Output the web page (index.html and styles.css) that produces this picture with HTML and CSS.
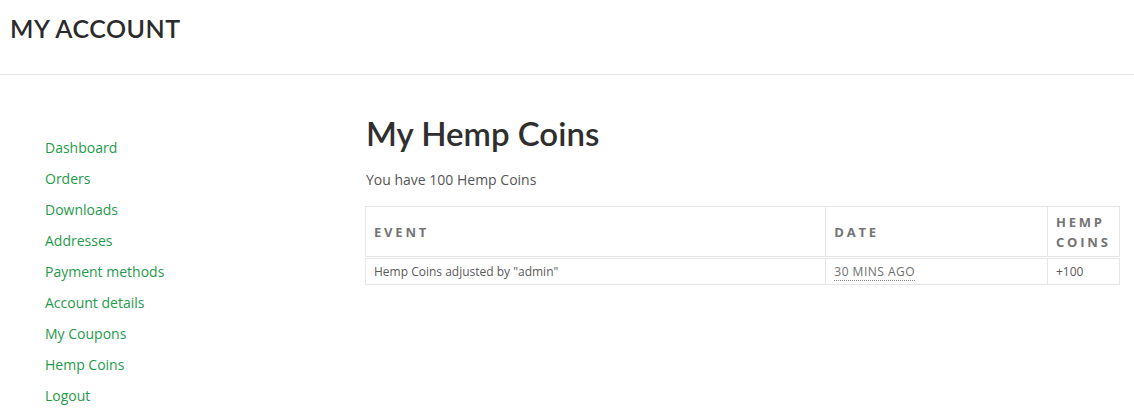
FILE: index.html
```
<!DOCTYPE html>
<html>
<head>
<meta charset="utf-8">
<link rel="stylesheet" href="styles.css">
</head>
<body>
<header class="page-header">
  <h1 class="page-title">MY ACCOUNT</h1>
</header>
<div class="account">
  <nav class="account-nav">
    <ul>
      <li><a href="#">Dashboard</a></li>
      <li><a href="#">Orders</a></li>
      <li><a href="#">Downloads</a></li>
      <li><a href="#">Addresses</a></li>
      <li><a href="#">Payment methods</a></li>
      <li><a href="#">Account details</a></li>
      <li><a href="#">My Coupons</a></li>
      <li><a href="#">Hemp Coins</a></li>
      <li><a href="#">Logout</a></li>
    </ul>
  </nav>
  <main class="account-content">
    <h2 class="content-title">My Hemp Coins</h2>
    <p class="balance">You have 100 Hemp Coins</p>
    <table class="points">
      <thead>
        <tr>
          <th class="col-event">Event</th>
          <th class="col-date">Date</th>
          <th class="col-coins">Hemp Coins</th>
        </tr>
      </thead>
      <tbody>
        <tr>
          <td>Hemp Coins adjusted by "admin"</td>
          <td><abbr class="ago" title="30 mins ago">30 mins ago</abbr></td>
          <td>+100</td>
        </tr>
      </tbody>
    </table>
  </main>
</div>
</body>
</html>
```
FILE: styles.css
```
html, body {
  margin: 0;
  padding: 0;
  background: #fff;
}
body {
  font-family: "Open Sans", "Liberation Sans", sans-serif;
  color: #555;
}
.page-header {
  border-bottom: 1px solid #e6e6e6;
  height: 75px;
  box-sizing: border-box;
  padding: 14px 10px 0;
}
.page-title {
  margin: 0;
  font-family: "Lato", "Liberation Sans", sans-serif;
  font-weight: 600;
  font-size: 25px;
  line-height: 28px;
  letter-spacing: 0.5px;
  color: #2b2b2b;
}
.account {
  display: flex;
  padding-top: 43px;
}
.account-nav {
  width: 365px;
  padding-left: 45px;
  box-sizing: border-box;
  flex: none;
}
.account-nav ul {
  list-style: none;
  margin: 0;
  padding: 20px 0 0;
}
.account-nav li {
  height: 31px;
  line-height: 20px;
  font-size: 14px;
}
.account-nav a {
  color: #1f9a4b;
  text-decoration: none;
}
.account-content {
  width: 755px;
  flex: none;
}
.content-title {
  margin: -5px 0 0;
  padding-left: 1px;
  font-family: "Lato", "Liberation Sans", sans-serif;
  font-weight: 600;
  font-size: 33px;
  line-height: 40px;
  color: #2f2f2f;
}
.balance {
  margin: 17px 0 0;
  padding-left: 1px;
  font-size: 14px;
  line-height: 20px;
  color: #555;
}
.points {
  margin-top: 16px;
  width: 755px;
  border-collapse: collapse;
  border: 1px solid #e6e6e6;
  font-size: 12px;
}
.points th {
  text-align: left;
  text-transform: uppercase;
  font-weight: 700;
  font-size: 13px;
  letter-spacing: 2.8px;
  color: #747474;
  line-height: 20px;
  padding: 5px 8px 4px;
  border: 1px solid #e6e6e6;
  border-bottom: 3px double #e6e6e6;
}
.points td {
  padding: 5px 8px 4px;
  line-height: 16px;
  border: 1px solid #e6e6e6;
  color: #5a5a5a;
}
.col-event { width: 444px; }
.col-date { width: 205px; }
.col-coins { width: 55px; }
.ago {
  text-transform: uppercase;
  text-decoration: none;
  border-bottom: 1px dotted #888;
  letter-spacing: 0.5px;
  color: #707070;
}
```
